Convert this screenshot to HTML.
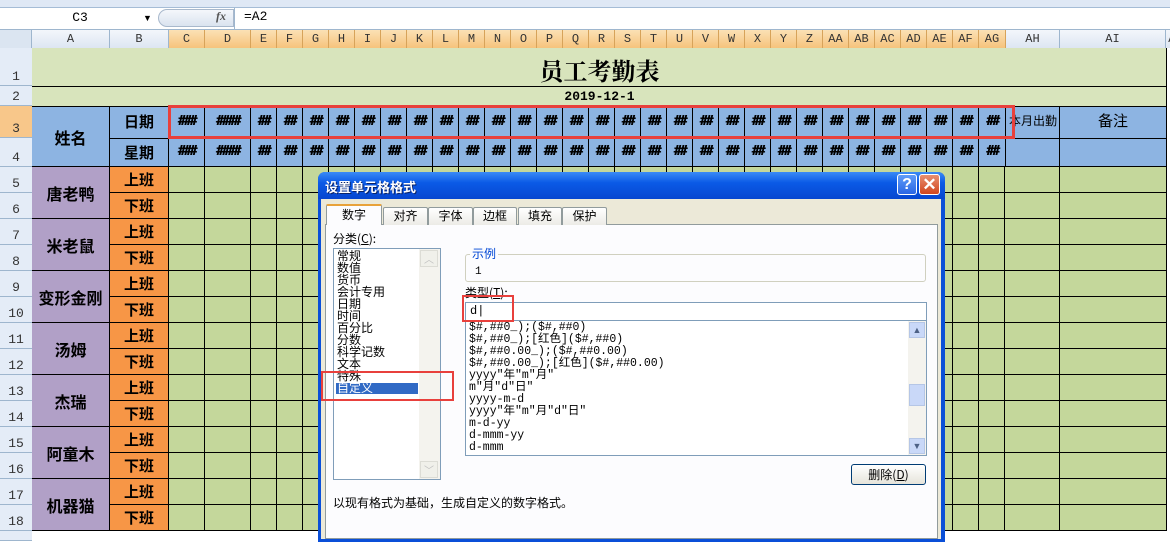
<!DOCTYPE html>
<html><head><meta charset="utf-8">
<style>
*{margin:0;padding:0;box-sizing:border-box}
body{width:1170px;height:535px;overflow:hidden;position:relative;background:#fff;font-family:"Liberation Sans","Noto Sans CJK SC",sans-serif}
.a{position:absolute}
.ch{position:absolute;top:30px;height:18px;font:12px "Liberation Mono","Noto Sans CJK SC",monospace;color:#333;text-align:center;line-height:18px;border-right:1px solid #9eb6ce;background:linear-gradient(#f3f6fb,#dde6f2)}
.ch.s{background:linear-gradient(#fbe1b5,#f6c37c);border-right-color:#d7a35a}
.rh{position:absolute;left:0;width:32px;font:13px "Liberation Mono",monospace;color:#333;text-align:center;border-bottom:1px solid #9eb6ce;background:#e4ecf7;display:flex;align-items:flex-end;justify-content:center;padding-bottom:1px}
.hs{position:absolute;display:flex;font:bold 13px "DejaVu Sans Mono",monospace;letter-spacing:-2px}
.hs span{display:block;text-align:center;border-right:1px solid #000;text-shadow:0.5px 0 #000}
.nm{position:absolute;left:32px;width:78px;height:52px;background:#b1a0c7;border-bottom:1px solid #000;border-right:1px solid #000;font:bold 16px "Noto Sans CJK SC",sans-serif;display:flex;align-items:center;justify-content:center}
.sb{position:absolute;left:110px;width:59px;height:26px;background:#f79646;border-bottom:1px solid #000;border-right:1px solid #000;font:bold 15px "Noto Sans CJK SC",sans-serif;text-align:center;line-height:25px}
.dl{font:12px "Noto Sans CJK SC",sans-serif;line-height:12px}
.tab{position:absolute;top:207px;height:18px;border:1px solid #919b9c;border-bottom:none;background:linear-gradient(#fff,#ecebe6);font:12px "Noto Sans CJK SC",sans-serif;text-align:center;line-height:16px;border-radius:2px 2px 0 0}
.li{font:11.5px "Liberation Mono","Noto Sans CJK SC",monospace;line-height:12px;white-space:pre}
</style></head><body>
<div class="a" style="left:0;top:0;width:1170px;height:8px;background:#dfe8f5;border-bottom:1px solid #a5bcd6"></div>
<div class="a" style="left:0;top:8px;width:1170px;height:22px;background:#fff;border-bottom:1px solid #9eb6ce"></div>
<div class="a" style="left:0;top:8px;width:150px;height:20px;font:13px 'Liberation Mono',monospace;text-align:center;line-height:20px;padding-left:10px">C3</div>
<div class="a" style="left:143px;top:13px;font-size:9px">▼</div>
<div class="a" style="left:158px;top:9px;width:76px;height:18px;border:1px solid #a8b8cc;border-radius:9px 0 0 9px;background:linear-gradient(#f4f7fb,#dae3ef)"></div>
<div class="a" style="left:216px;top:9px;font:italic bold 12px 'Liberation Serif',serif;color:#555">fx</div>
<div class="a" style="left:234px;top:8px;width:1px;height:21px;background:#9eb6ce"></div>
<div class="a" style="left:244px;top:9px;font:13px 'Liberation Mono',monospace">=A2</div>

<div class="a" style="left:0;top:30px;width:32px;height:18px;background:#dbe5f1;border-right:1px solid #9eb6ce"></div>
<div class="ch" style="left:32px;width:78px">A</div>
<div class="ch" style="left:110px;width:59px">B</div>
<div class="ch s" style="left:169px;width:36px">C</div>
<div class="ch s" style="left:205px;width:46px">D</div>
<div class="ch s" style="left:251px;width:26px">E</div>
<div class="ch s" style="left:277px;width:26px">F</div>
<div class="ch s" style="left:303px;width:26px">G</div>
<div class="ch s" style="left:329px;width:26px">H</div>
<div class="ch s" style="left:355px;width:26px">I</div>
<div class="ch s" style="left:381px;width:26px">J</div>
<div class="ch s" style="left:407px;width:26px">K</div>
<div class="ch s" style="left:433px;width:26px">L</div>
<div class="ch s" style="left:459px;width:26px">M</div>
<div class="ch s" style="left:485px;width:26px">N</div>
<div class="ch s" style="left:511px;width:26px">O</div>
<div class="ch s" style="left:537px;width:26px">P</div>
<div class="ch s" style="left:563px;width:26px">Q</div>
<div class="ch s" style="left:589px;width:26px">R</div>
<div class="ch s" style="left:615px;width:26px">S</div>
<div class="ch s" style="left:641px;width:26px">T</div>
<div class="ch s" style="left:667px;width:26px">U</div>
<div class="ch s" style="left:693px;width:26px">V</div>
<div class="ch s" style="left:719px;width:26px">W</div>
<div class="ch s" style="left:745px;width:26px">X</div>
<div class="ch s" style="left:771px;width:26px">Y</div>
<div class="ch s" style="left:797px;width:26px">Z</div>
<div class="ch s" style="left:823px;width:26px">AA</div>
<div class="ch s" style="left:849px;width:26px">AB</div>
<div class="ch s" style="left:875px;width:26px">AC</div>
<div class="ch s" style="left:901px;width:26px">AD</div>
<div class="ch s" style="left:927px;width:26px">AE</div>
<div class="ch s" style="left:953px;width:26px">AF</div>
<div class="ch s" style="left:979px;width:27px">AG</div>
<div class="ch" style="left:1006px;width:54px">AH</div>
<div class="ch" style="left:1060px;width:106px">AI</div>
<div class="ch" style="left:1166px;width:20px">AJ</div>

<div class="rh" style="top:48px;height:38px">1</div>
<div class="rh" style="top:86px;height:20px">2</div>
<div class="rh" style="top:106px;height:32px;background:#f8c78a">3</div>
<div class="rh" style="top:138px;height:29px">4</div>
<div class="rh" style="top:167px;height:26px">5</div>
<div class="rh" style="top:193px;height:26px">6</div>
<div class="rh" style="top:219px;height:26px">7</div>
<div class="rh" style="top:245px;height:26px">8</div>
<div class="rh" style="top:271px;height:26px">9</div>
<div class="rh" style="top:297px;height:26px">10</div>
<div class="rh" style="top:323px;height:26px">11</div>
<div class="rh" style="top:349px;height:26px">12</div>
<div class="rh" style="top:375px;height:26px">13</div>
<div class="rh" style="top:401px;height:26px">14</div>
<div class="rh" style="top:427px;height:26px">15</div>
<div class="rh" style="top:453px;height:26px">16</div>
<div class="rh" style="top:479px;height:26px">17</div>
<div class="rh" style="top:505px;height:26px">18</div>
<div class="rh" style="top:531px;height:10px"></div>

<div class="a" style="left:32px;top:48px;width:1135px;height:58px;background:#d8e4bc;border-right:1px solid #000"></div>
<div class="a" style="left:32px;top:86px;width:1135px;height:1px;background:#000"></div>
<div class="a" style="left:32px;top:52px;width:1135px;text-align:center;font:bold 24px 'Noto Serif CJK SC','Noto Sans CJK SC',serif">员工考勤表</div>
<div class="a" style="left:32px;top:89px;width:1135px;text-align:center;font:bold 13px 'Liberation Mono',monospace">2019-12-1</div>

<div class="a" style="left:32px;top:106px;width:1135px;height:61px;background:#8db4e2;border-top:1px solid #000;border-right:1px solid #000"></div>
<div class="a" style="left:110px;top:138px;width:1057px;height:1px;background:#000"></div>
<div class="a" style="left:32px;top:166px;width:1135px;height:1px;background:#000"></div>
<div class="a" style="left:109px;top:106px;width:1px;height:61px;background:#000"></div>
<div class="a" style="left:168px;top:106px;width:1px;height:61px;background:#000"></div>
<div class="a" style="left:1059px;top:106px;width:1px;height:61px;background:#000"></div>
<div class="a" style="left:32px;top:106px;width:77px;height:61px;font:bold 16px 'Noto Sans CJK SC',sans-serif;display:flex;align-items:center;justify-content:center">姓名</div>
<div class="a" style="left:110px;top:106px;width:58px;height:32px;font:bold 15px 'Noto Sans CJK SC',sans-serif;text-align:center;line-height:32px">日期</div>
<div class="a" style="left:110px;top:138px;width:58px;height:29px;font:bold 15px 'Noto Sans CJK SC',sans-serif;text-align:center;line-height:29px">星期</div>
<div class="a" style="left:1006px;top:112px;width:54px;font:12px 'Noto Sans CJK SC',sans-serif;text-align:center">本月出勤</div>
<div class="a" style="left:1060px;top:110px;width:106px;font:15px 'Noto Sans CJK SC',sans-serif;text-align:center">备注</div>

<div class="hs" style="left:169px;top:106px;height:32px;line-height:32px">
<span style="width:36px">###</span><span style="width:46px">####</span><span style="width:26px">##</span><span style="width:26px">##</span><span style="width:26px">##</span><span style="width:26px">##</span><span style="width:26px">##</span><span style="width:26px">##</span><span style="width:26px">##</span><span style="width:26px">##</span><span style="width:26px">##</span><span style="width:26px">##</span><span style="width:26px">##</span><span style="width:26px">##</span><span style="width:26px">##</span><span style="width:26px">##</span><span style="width:26px">##</span><span style="width:26px">##</span><span style="width:26px">##</span><span style="width:26px">##</span><span style="width:26px">##</span><span style="width:26px">##</span><span style="width:26px">##</span><span style="width:26px">##</span><span style="width:26px">##</span><span style="width:26px">##</span><span style="width:26px">##</span><span style="width:26px">##</span><span style="width:26px">##</span><span style="width:26px">##</span><span style="width:27px">##</span></div>
<div class="hs" style="left:169px;top:138px;height:28px;line-height:28px">
<span style="width:36px">###</span><span style="width:46px">####</span><span style="width:26px">##</span><span style="width:26px">##</span><span style="width:26px">##</span><span style="width:26px">##</span><span style="width:26px">##</span><span style="width:26px">##</span><span style="width:26px">##</span><span style="width:26px">##</span><span style="width:26px">##</span><span style="width:26px">##</span><span style="width:26px">##</span><span style="width:26px">##</span><span style="width:26px">##</span><span style="width:26px">##</span><span style="width:26px">##</span><span style="width:26px">##</span><span style="width:26px">##</span><span style="width:26px">##</span><span style="width:26px">##</span><span style="width:26px">##</span><span style="width:26px">##</span><span style="width:26px">##</span><span style="width:26px">##</span><span style="width:26px">##</span><span style="width:26px">##</span><span style="width:26px">##</span><span style="width:26px">##</span><span style="width:26px">##</span><span style="width:27px">##</span></div>
<div class="a" style="left:168px;top:105px;width:847px;height:34px;border:3px solid #e8403c"></div>

<div class="a" style="left:169px;top:167px;width:998px;height:364px;background-color:#c4d79b;background-image:repeating-linear-gradient(to bottom,transparent 0 25px,#000 25px 26px)"></div>
<div class="a" style="left:204px;top:167px;width:1px;height:364px;background:#000"></div>
<div class="a" style="left:250px;top:167px;width:756px;height:364px;background-image:repeating-linear-gradient(to right,#000 0 1px,transparent 1px 26px)"></div>
<div class="a" style="left:1059px;top:167px;width:1px;height:364px;background:#000"></div>
<div class="a" style="left:1166px;top:48px;width:1px;height:483px;background:#000"></div>

<div class="nm" style="top:167px">唐老鸭</div>
<div class="nm" style="top:219px">米老鼠</div>
<div class="nm" style="top:271px">变形金刚</div>
<div class="nm" style="top:323px">汤姆</div>
<div class="nm" style="top:375px">杰瑞</div>
<div class="nm" style="top:427px">阿童木</div>
<div class="nm" style="top:479px">机器猫</div>
<div class="sb" style="top:167px">上班</div><div class="sb" style="top:193px">下班</div>
<div class="sb" style="top:219px">上班</div><div class="sb" style="top:245px">下班</div>
<div class="sb" style="top:271px">上班</div><div class="sb" style="top:297px">下班</div>
<div class="sb" style="top:323px">上班</div><div class="sb" style="top:349px">下班</div>
<div class="sb" style="top:375px">上班</div><div class="sb" style="top:401px">下班</div>
<div class="sb" style="top:427px">上班</div><div class="sb" style="top:453px">下班</div>
<div class="sb" style="top:479px">上班</div><div class="sb" style="top:505px">下班</div>

<div class="a" style="left:318px;top:172px;width:627px;height:370px;background:#0a4fd8;border-radius:7px 7px 0 0"></div>
<div class="a" style="left:318px;top:172px;width:627px;height:27px;border-radius:7px 7px 0 0;background:linear-gradient(#3a8bf6,#0b5ae6 40%,#0646d0)"></div>
<div class="a" style="left:325px;top:177px;color:#fff;font:bold 13px 'Noto Sans CJK SC',sans-serif;text-shadow:1px 1px #0a246a">设置单元格格式</div>
<div class="a" style="left:897px;top:174px;width:20px;height:21px;border:1px solid #fff;border-radius:3px;background:linear-gradient(#5f9cf9,#2a66e4);color:#fff;font:bold 16px 'Liberation Sans';text-align:center;line-height:19px">?</div>
<div class="a" style="left:919px;top:174px;width:21px;height:21px;border:1px solid #fff;border-radius:3px;background:linear-gradient(#e88f70,#d1461f);color:#fff;font:bold 17px 'Liberation Sans';text-align:center;line-height:19px">✕</div>
<div class="a" style="left:321px;top:199px;width:620px;height:340px;background:#ece9d8"></div>
<div class="a" style="left:325px;top:224px;width:613px;height:315px;background:#fcfcfe;border:1px solid #919b9c"></div>
<div class="tab" style="left:326px;top:204px;width:56px;height:21px;background:#fcfcfe;border-top:2px solid #e8a23a;line-height:18px">数字</div>
<div class="tab" style="left:383px;width:45px">对齐</div>
<div class="tab" style="left:428px;width:45px">字体</div>
<div class="tab" style="left:473px;width:44px">边框</div>
<div class="tab" style="left:518px;width:44px">填充</div>
<div class="tab" style="left:562px;width:45px">保护</div>
<div class="a dl" style="left:333px;top:233px">分类(<u>C</u>):</div>
<div class="a" style="left:333px;top:248px;width:108px;height:232px;background:#fff;border:1px solid #7f9db9"></div>
<div class="a" style="left:419px;top:249px;width:21px;height:230px;background:#f4f3ee"></div>
<div class="a" style="left:420px;top:250px;width:18px;height:17px;border:1px solid #dcdcd5;background:#f0f0ea;color:#c0c0c0;font-size:10px;text-align:center">︿</div>
<div class="a" style="left:420px;top:461px;width:18px;height:17px;border:1px solid #dcdcd5;background:#f0f0ea;color:#c0c0c0;font-size:10px;text-align:center">﹀</div>
<div class="a" style="left:336px;top:383px;width:82px;height:11px;background:#316ac5"></div>
<div class="a dl" style="left:337px;top:250px">常规<br>数值<br>货币<br>会计专用<br>日期<br>时间<br>百分比<br>分数<br>科学记数<br>文本<br>特殊<br><span style="color:#fff">自定义</span></div>
<div class="a" style="left:321px;top:371px;width:133px;height:30px;border:2px solid #e8403c"></div>
<div class="a" style="left:465px;top:254px;width:461px;height:28px;border:1px solid #d0d0bf;border-radius:3px"></div>
<div class="a dl" style="left:470px;top:248px;color:#0046d5;background:#fcfcfe;padding:0 2px">示例</div>
<div class="a" style="left:475px;top:266px;font:11px 'Liberation Mono',monospace">1</div>
<div class="a dl" style="left:465px;top:287px">类型(<u>T</u>):</div>
<div class="a" style="left:465px;top:302px;width:462px;height:19px;background:#fff;border:1px solid #7f9db9"></div>
<div class="a" style="left:470px;top:304px;font:12px 'Liberation Mono',monospace">d|</div>
<div class="a" style="left:465px;top:320px;width:462px;height:136px;background:#fff;border:1px solid #7f9db9"></div>
<div class="a" style="left:908px;top:321px;width:18px;height:134px;background:#f4f3ee"></div>
<div class="a" style="left:909px;top:322px;width:16px;height:16px;border:1px solid #b5c6e6;background:#c9d8f8;color:#4d6185;font-size:9px;text-align:center;line-height:14px">▲</div>
<div class="a" style="left:909px;top:384px;width:16px;height:22px;border:1px solid #b5c6e6;background:#c9d8f8"></div>
<div class="a" style="left:909px;top:438px;width:16px;height:16px;border:1px solid #b5c6e6;background:#c9d8f8;color:#4d6185;font-size:9px;text-align:center;line-height:14px">▼</div>
<div class="a li" style="left:469px;top:322px">$#,##0_);($#,##0)
$#,##0_);[红色]($#,##0)
$#,##0.00_);($#,##0.00)
$#,##0.00_);[红色]($#,##0.00)
yyyy"年"m"月"
m"月"d"日"
yyyy-m-d
yyyy"年"m"月"d"日"
m-d-yy
d-mmm-yy
d-mmm</div>
<div class="a" style="left:462px;top:295px;width:52px;height:27px;border:2px solid #e8403c"></div>
<div class="a" style="left:851px;top:464px;width:75px;height:21px;border:1px solid #003c74;border-radius:3px;background:linear-gradient(#fff,#e6e4da);font:12px 'Noto Sans CJK SC',sans-serif;text-align:center;line-height:19px">删除(<u>D</u>)</div>
<div class="a dl" style="left:333px;top:497px">以现有格式为基础，生成自定义的数字格式。</div>
</body></html>
